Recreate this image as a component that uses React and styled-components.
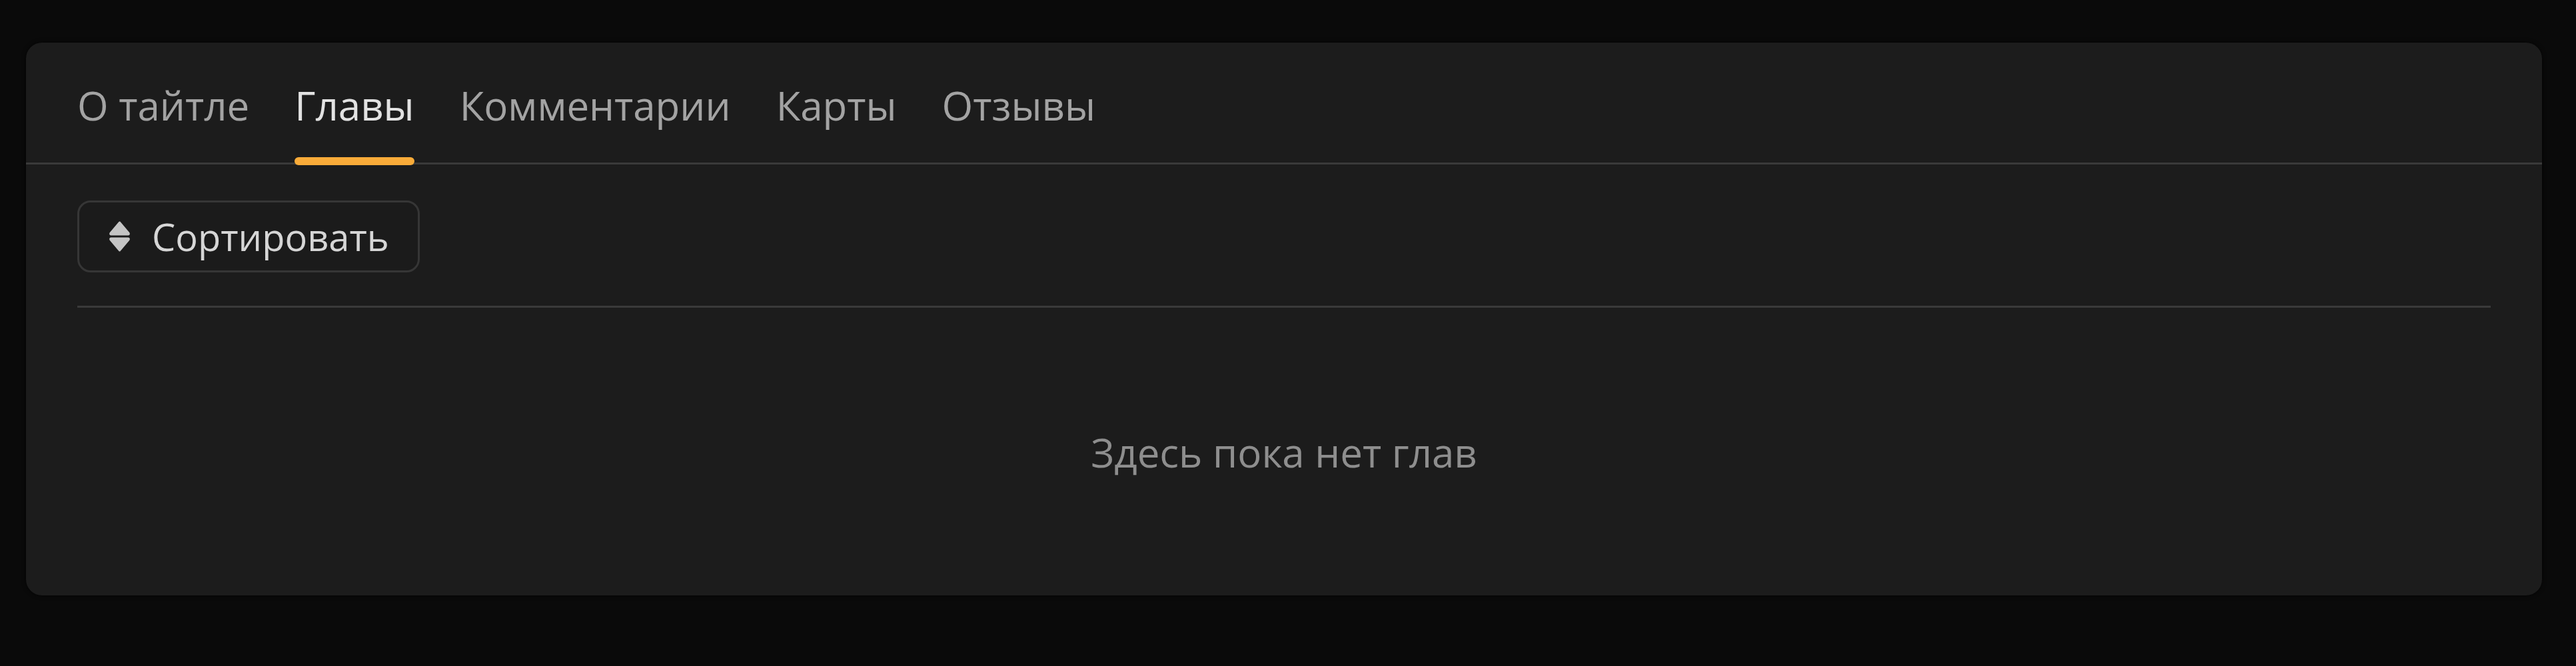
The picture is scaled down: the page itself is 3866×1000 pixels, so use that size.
import React, { useState } from "react";
import styled, { createGlobalStyle } from "styled-components";

const GlobalStyle = createGlobalStyle`
  html, body {
    margin: 0;
    padding: 0;
    background: #0a0a0a;
    font-family: "Open Sans", "Noto Sans", sans-serif;
  }
`;

const TABS = [
  { id: "about", text: "О тайтле" },
  { id: "chapters", text: "Главы" },
  { id: "comments", text: "Комментарии" },
  { id: "cards", text: "Карты" },
  { id: "reviews", text: "Отзывы" },
];

const Page = styled.div`
  min-height: 1000px;
  padding: 64px 51px 0 39px;
  box-sizing: border-box;
`;

const Card = styled.section`
  background: #1c1c1c;
  border-radius: 24px;
  box-shadow: 0 0 6px rgba(0, 0, 0, 0.7);
  overflow: hidden;
`;

const TabBar = styled.nav`
  display: flex;
  gap: 68px;
  padding: 0 77px;
  border-bottom: 3px solid #3a3a3a;
`;

const Tab = styled.button`
  position: relative;
  background: none;
  border: none;
  padding: 52px 0 44px;
  margin: 0;
  font-family: inherit;
  font-size: 60px;
  line-height: 84px;
  color: ${props => (props.active ? "#e2e2e2" : "#a3a3a3")};
  cursor: pointer;

  &::after {
    content: "";
    display: ${props => (props.active ? "block" : "none")};
    position: absolute;
    left: 0;
    right: 0;
    bottom: -4px;
    height: 12px;
    border-radius: 6px;
    background: #f9ab39;
  }
`;

const Content = styled.div`
  padding: 54px 77px 0;
`;

const Toolbar = styled.div`
  display: flex;
  padding-bottom: 50px;
  border-bottom: 3px solid #3a3a3a;
`;

const SortButton = styled.button`
  display: flex;
  align-items: center;
  gap: 32px;
  height: 108px;
  box-sizing: border-box;
  padding: 0 43px 0 44px;
  background: #1b1b1b;
  border: 3px solid #363636;
  border-radius: 20px;
  font-family: inherit;
  font-size: 56px;
  color: #d6d6d6;
  cursor: pointer;
`;

const Empty = styled.p`
  margin: 0;
  padding: 175px 0 173px;
  text-align: center;
  font-size: 60px;
  line-height: 84px;
  color: #8e8e8e;
`;

const SortIcon = () => (
  <svg width="33" height="46" viewBox="0 0 33 46" fill="#c4c4c4">
    <path d="M16.5 2 L30 18 Q31 20 29 20 L4 20 Q2 20 3 18 Z" stroke="#c4c4c4" strokeWidth="3" strokeLinejoin="round" />
    <path d="M16.5 44 L30 28 Q31 26 29 26 L4 26 Q2 26 3 28 Z" stroke="#c4c4c4" strokeWidth="3" strokeLinejoin="round" />
  </svg>
);

const App = () => {
  const [active, setActive] = useState("chapters");

  return (
    <Page>
      <GlobalStyle />
      <Card>
        <TabBar>
          {TABS.map(tab => (
            <Tab key={tab.id} active={active === tab.id} onClick={() => setActive(tab.id)}>
              {tab.text}
            </Tab>
          ))}
        </TabBar>
        <Content>
          <Toolbar>
            <SortButton>
              <SortIcon />
              Сортировать
            </SortButton>
          </Toolbar>
          <Empty>Здесь пока нет глав</Empty>
        </Content>
      </Card>
    </Page>
  );
};

export default App;
